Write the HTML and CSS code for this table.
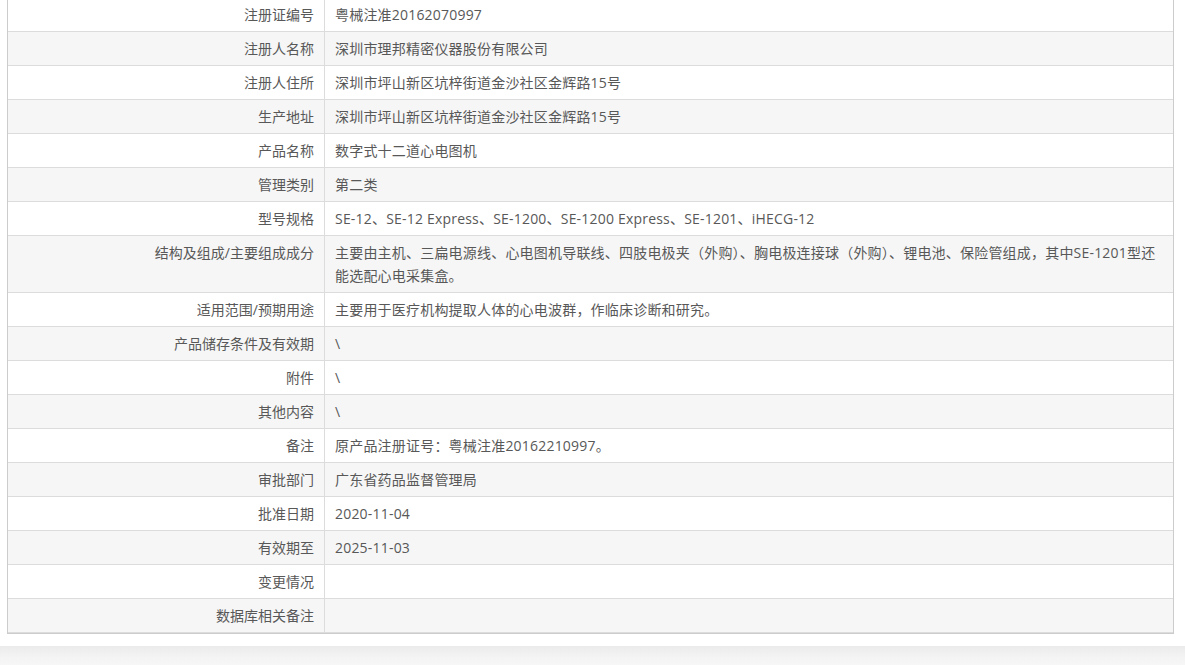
FILE: index.html
```html
<!DOCTYPE html>
<html lang="zh-CN">
<head>
<meta charset="utf-8">
<title>注册证信息</title>
<link rel="stylesheet" href="styles.css">
</head>
<body>
<div class="page">
  <div class="info">
    <div class="row"><div class="label">注册证编号</div><div class="value">粤械注准20162070997</div></div>
    <div class="row"><div class="label">注册人名称</div><div class="value">深圳市理邦精密仪器股份有限公司</div></div>
    <div class="row"><div class="label">注册人住所</div><div class="value">深圳市坪山新区坑梓街道金沙社区金辉路15号</div></div>
    <div class="row"><div class="label">生产地址</div><div class="value">深圳市坪山新区坑梓街道金沙社区金辉路15号</div></div>
    <div class="row"><div class="label">产品名称</div><div class="value">数字式十二道心电图机</div></div>
    <div class="row"><div class="label">管理类别</div><div class="value">第二类</div></div>
    <div class="row"><div class="label">型号规格</div><div class="value">SE-12、SE-12 Express、SE-1200、SE-1200 Express、SE-1201、iHECG-12</div></div>
    <div class="row"><div class="label">结构及组成/主要组成成分</div><div class="value">主要由主机、三扁电源线、心电图机导联线、四肢电极夹（外购）、胸电极连接球（外购）、锂电池、保险管组成，其中SE-1201型还能选配心电采集盒。</div></div>
    <div class="row"><div class="label">适用范围/预期用途</div><div class="value">主要用于医疗机构提取人体的心电波群，作临床诊断和研究。</div></div>
    <div class="row"><div class="label">产品储存条件及有效期</div><div class="value">\</div></div>
    <div class="row"><div class="label">附件</div><div class="value">\</div></div>
    <div class="row"><div class="label">其他内容</div><div class="value">\</div></div>
    <div class="row"><div class="label">备注</div><div class="value">原产品注册证号：粤械注准20162210997。</div></div>
    <div class="row"><div class="label">审批部门</div><div class="value">广东省药品监督管理局</div></div>
    <div class="row"><div class="label">批准日期</div><div class="value">2020-11-04</div></div>
    <div class="row"><div class="label">有效期至</div><div class="value">2025-11-03</div></div>
    <div class="row"><div class="label">变更情况</div><div class="value"></div></div>
    <div class="row"><div class="label">数据库相关备注</div><div class="value"></div></div>
  </div>
</div>
<div class="shade"></div>
</body>
</html>
```
FILE: styles.css
```css
html, body {
  margin: 0;
  padding: 0;
  background: #f8f8f8;
}
body {
  font-family: "Open Sans", "Noto Sans CJK SC", sans-serif;
  font-size: 14px;
  color: #585858;
}
.page {
  background: #fff;
  margin-top: -3px;
  padding: 0 11px 12px 7px;
}
.info {
  width: 1167px;
  box-sizing: border-box;
  border: 1px solid #ccc;
  border-top-color: #ddd;
}
.row {
  display: flex;
  border-bottom: 1px solid #dcdcdc;
}
.row:nth-child(even) {
  background: #f6f6f6;
}
.label {
  flex: 0 0 317px;
  box-sizing: border-box;
  border-right: 1px solid #dcdcdc;
  padding: 5px 10px;
  line-height: 23px;
  text-align: right;
  min-height: 33px;
}
.value {
  flex: 1 1 auto;
  min-width: 0;
  padding: 5px 10px;
  line-height: 23px;
  min-height: 23px;
  letter-spacing: 0.2px;
}
.shade {
  height: 22px;
  background: linear-gradient(#ebebeb, #f4f4f4 55%, #f8f8f8);
}
```
